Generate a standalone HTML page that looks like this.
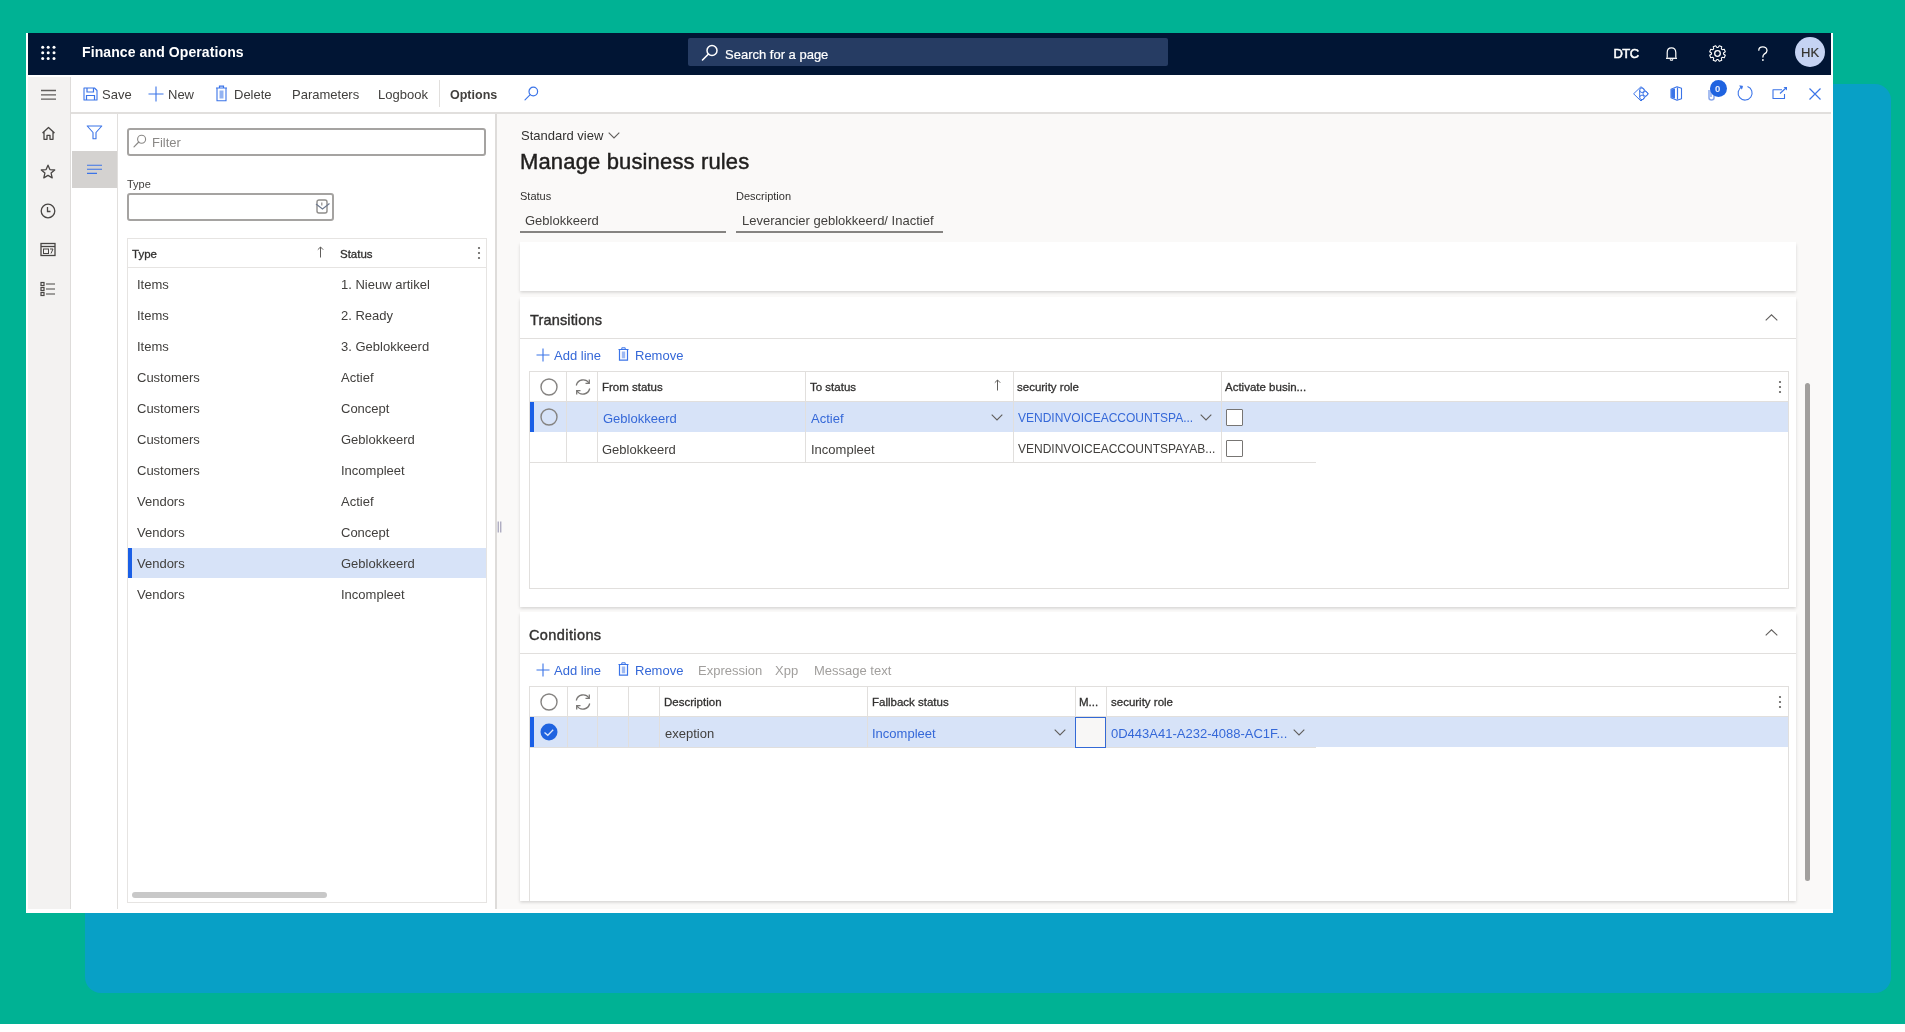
<!DOCTYPE html>
<html><head><meta charset="utf-8">
<style>
*{box-sizing:border-box;margin:0;padding:0}
html,body{width:1905px;height:1032px;overflow:hidden}
body{background:#00b294;position:relative;font-family:"Liberation Sans",sans-serif;color:#42403e;font-size:13px}
.a{position:absolute}
.t{position:absolute;white-space:nowrap;line-height:1}
.blue{color:#3568d8}
svg{position:absolute;overflow:visible}
#wrap{position:absolute;left:0;top:0;width:1905px;height:1032px;filter:blur(0.45px)}
</style></head><body><div id="wrap">
<!-- background decor -->
<div class="a" style="left:85px;top:84px;width:1806px;height:909px;background:#08a0c6;border-radius:16px"></div>
<div class="a" style="left:0;top:1024px;width:1905px;height:8px;background:#fff"></div>
<!-- app frame -->
<div class="a" style="left:26px;top:33px;width:1807px;height:880px;background:#fff"></div>
<!-- header -->
<div class="a" style="left:28px;top:33px;width:1803px;height:42px;background:#011534"></div>
<!-- nav -->
<div class="a" style="left:28px;top:77px;width:43px;height:832px;background:#f3f2f1;border-right:1px solid #dedcda"></div>
<!-- toolbar border -->
<div class="a" style="left:71px;top:112px;width:1760px;height:2px;background:#e1dfdd"></div>
<!-- filter strip -->
<div class="a" style="left:117px;top:114px;width:1px;height:795px;background:#e1dfdd"></div>
<div class="a" style="left:72px;top:151px;width:45px;height:37px;background:#d4d2d0"></div>
<!-- filter pane border -->
<div class="a" style="left:495px;top:114px;width:2px;height:795px;background:#dedcda"></div>
<!-- main bg -->
<div class="a" style="left:497px;top:114px;width:1334px;height:795px;background:#faf9f8"></div>

<!-- header content -->
<svg style="left:40px;top:45px" width="18" height="17" viewBox="0 0 18 17">
<g fill="#fff">
<circle cx="2.7" cy="2.3" r="1.5"/><circle cx="8.2" cy="2.3" r="1.5"/><circle cx="14" cy="2.3" r="1.5"/>
<circle cx="2.7" cy="7.7" r="1.5"/><circle cx="8.2" cy="7.7" r="1.5"/><circle cx="14" cy="7.7" r="1.5"/>
<circle cx="2.7" cy="13.5" r="1.5"/><circle cx="8.2" cy="13.5" r="1.5"/><circle cx="14" cy="13.5" r="1.5"/>
</g></svg>
<div class="t" style="left:82px;top:45px;font-size:14px;font-weight:bold;color:#fff;letter-spacing:0.1px">Finance and Operations</div>
<div class="a" style="left:688px;top:38px;width:480px;height:28px;background:#263c63;border-radius:2px"></div>
<svg style="left:701px;top:44px" width="18" height="18" viewBox="0 0 18 18"><circle cx="11" cy="6.5" r="5" fill="none" stroke="#fff" stroke-width="1.5"/><path d="M7.5 10 L1.5 16" stroke="#fff" stroke-width="1.6" stroke-linecap="round"/></svg>
<div class="t" style="left:725px;top:47.5px;font-size:13px;color:#fff;-webkit-text-stroke:0.2px #fff">Search for a page</div>
<div class="t" style="left:1613.5px;top:47px;font-size:13px;color:#fff;letter-spacing:-0.6px;-webkit-text-stroke:0.5px #fff">DTC</div>
<svg style="left:1664px;top:45.5px" width="16" height="16" viewBox="0 0 16 16"><path d="M3.2 11.8 L3.2 6.5 C3.2 3.3 5 1.8 7.5 1.8 C10 1.8 11.8 3.3 11.8 6.5 L11.8 11.8" fill="none" stroke="#fff" stroke-width="1.2" stroke-linejoin="round"/><path d="M2 12.3 L13 12.3" stroke="#fff" stroke-width="1.3"/><path d="M6 13.3 Q7.5 15.2 9 13.3" fill="none" stroke="#fff" stroke-width="1.2"/></svg>
<svg style="left:1709px;top:45px" width="17" height="17" viewBox="0 0 17 17"><path d="M14.47 9.06 L16.30 10.27 L15.27 12.77 L13.12 12.33 L12.33 13.12 L12.77 15.27 L10.27 16.30 L9.06 14.47 L7.94 14.47 L6.73 16.30 L4.23 15.27 L4.67 13.12 L3.88 12.33 L1.73 12.77 L0.70 10.27 L2.53 9.06 L2.53 7.94 L0.70 6.73 L1.73 4.23 L3.88 4.67 L4.67 3.88 L4.23 1.73 L6.73 0.70 L7.94 2.53 L9.06 2.53 L10.27 0.70 L12.77 1.73 L12.33 3.88 L13.12 4.67 L15.27 4.23 L16.30 6.73 L14.47 7.94 Z" fill="none" stroke="#fff" stroke-width="1.05" stroke-linejoin="round"/><circle cx="8.5" cy="8.5" r="2.8" fill="none" stroke="#fff" stroke-width="1.3"/></svg>
<svg style="left:1757px;top:46px" width="12" height="16" viewBox="0 0 12 16"><path d="M1.8 4.2 C1.8 1.8 3.7 0.8 5.8 0.8 C8 0.8 10 2.2 10 4.4 C10 6.6 8.2 7.4 6.9 8.4 C6.1 9 5.9 9.6 5.9 11" fill="none" stroke="#fff" stroke-width="1.3" stroke-linecap="round"/><circle cx="5.9" cy="14" r="0.9" fill="#fff"/></svg>
<div class="a" style="left:1795px;top:37px;width:30px;height:30px;border-radius:50%;background:#c5d3f3"></div>
<div class="t" style="left:1801px;top:46px;font-size:13px;color:#35332f;-webkit-text-stroke:0.2px #35332f">HK</div>

<!-- nav icons -->
<svg style="left:40px;top:89px" width="17" height="12" viewBox="0 0 17 12"><path d="M1 1.5H16M1 5.8H16M1 10.2H16" stroke="#605e5c" stroke-width="1.3"/></svg>
<svg style="left:41px;top:126px" width="15" height="15" viewBox="0 0 15 15"><path d="M1.5 7 L7.5 1.5 L13.5 7 M3 5.8 V13.3 H6 V9.3 H9 V13.3 H12 V5.8" fill="none" stroke="#484644" stroke-width="1.3" stroke-linejoin="round"/></svg>
<svg style="left:40px;top:164px" width="16" height="16" viewBox="0 0 16 16"><path d="M8 1.2 L9.9 5.6 L14.7 6 L11.1 9.1 L12.2 13.9 L8 11.4 L3.8 13.9 L4.9 9.1 L1.3 6 L6.1 5.6 Z" fill="none" stroke="#484644" stroke-width="1.3" stroke-linejoin="round"/></svg>
<svg style="left:40px;top:203px" width="16" height="16" viewBox="0 0 16 16"><circle cx="8" cy="8" r="6.8" fill="none" stroke="#484644" stroke-width="1.3"/><path d="M7.5 4 V8.5 H10.5" fill="none" stroke="#484644" stroke-width="1.3"/></svg>
<svg style="left:40px;top:242px" width="16" height="15" viewBox="0 0 16 15"><rect x="1" y="1.5" width="14" height="12" fill="none" stroke="#484644" stroke-width="1.3"/><path d="M1 4.5 H15" stroke="#484644" stroke-width="1.3"/><rect x="3.5" y="7" width="5" height="4.5" fill="none" stroke="#484644" stroke-width="1"/><path d="M10 7 H13 L11 11.5" fill="none" stroke="#484644" stroke-width="1"/></svg>
<svg style="left:40px;top:281px" width="16" height="16" viewBox="0 0 16 16"><g fill="none" stroke="#484644" stroke-width="1.2"><rect x="1" y="1.5" width="3" height="3"/><rect x="1" y="6.5" width="3" height="3"/><rect x="1" y="11.5" width="3" height="3"/><path d="M6 3H15M6 8H15M6 13H15"/></g></svg>

<!-- toolbar -->
<svg style="left:83px;top:87px" width="15" height="14" viewBox="0 0 15 14"><path d="M1 1 H11.5 L14 3.5 V13 H1 Z" fill="none" stroke="#3b74e8" stroke-width="1.1" stroke-linejoin="round"/><path d="M4 1 V5 H10.5 V1" fill="none" stroke="#3b74e8" stroke-width="1.2"/><path d="M3.5 13 V8.5 H11.5 V13" fill="none" stroke="#3b74e8" stroke-width="1.2"/></svg>
<div class="t" style="left:102px;top:88px">Save</div>
<svg style="left:148px;top:86px" width="16" height="16" viewBox="0 0 16 16"><path d="M8 0.5 V15.5 M0.5 8 H15.5" stroke="#3b74e8" stroke-width="1.1"/></svg>
<div class="t" style="left:168px;top:88px">New</div>
<svg style="left:215px;top:85px" width="13" height="17" viewBox="0 0 13 17"><path d="M1 3 H12 M4.5 3 V1.2 H8.5 V3" fill="none" stroke="#3b74e8" stroke-width="1.2"/><path d="M2 3 V15.8 H11 V3" fill="none" stroke="#3b74e8" stroke-width="1.1"/><rect x="4.5" y="5.5" width="4" height="8" fill="#3b74e8" opacity="0.55"/></svg>
<div class="t" style="left:234px;top:88px">Delete</div>
<div class="t" style="left:292px;top:88px">Parameters</div>
<div class="t" style="left:378px;top:88px">Logbook</div>
<div class="a" style="left:439px;top:80px;width:1px;height:27px;background:#e1dfdd"></div>
<div class="t" style="left:450px;top:88.5px;font-weight:bold;font-size:12.5px">Options</div>
<svg style="left:524px;top:86px" width="15" height="15" viewBox="0 0 15 15"><circle cx="9.3" cy="5.5" r="4.3" fill="none" stroke="#3b74e8" stroke-width="1.2"/><path d="M6.2 8.6 L1 13.8" stroke="#3b74e8" stroke-width="1.1" stroke-linecap="round"/></svg>

<!-- toolbar right icons -->
<svg style="left:1633px;top:86px" width="17" height="16" viewBox="0 0 17 16"><g fill="none" stroke="#3b74e8" stroke-width="1"><path d="M8 0.7 L15.5 7.8 L8 15 L0.6 7.8 Z"/><circle cx="9" cy="4.2" r="2.3"/><circle cx="12.3" cy="7.8" r="2.3"/><circle cx="9" cy="11.4" r="2.3"/><path d="M6.7 4.2 V11.4"/></g></svg>
<svg style="left:1670px;top:86px" width="13" height="15" viewBox="0 0 13 15"><path d="M1 3.3 L7 0.8 L11.5 2.3 V12.7 L7 14.2 L1 11.8 Z" fill="none" stroke="#3b74e8" stroke-width="1.1" stroke-linejoin="round"/><path d="M1.2 3.5 L5 2.6 V12.5 L1.2 11.6 Z" fill="#3b74e8"/><path d="M7.5 1.5 V13.5" stroke="#3b74e8" stroke-width="1.2"/></svg>
<svg style="left:1707px;top:86px" width="9" height="16" viewBox="0 0 9 16"><path d="M2 4 V12 C2 14.5 7 14.5 7 12 V3 C7 1 4 1 4 3 V11" fill="none" stroke="#8aa8ec" stroke-width="1.5"/></svg>
<div class="a" style="left:1710px;top:80px;width:17px;height:17px;border-radius:50%;background:#1f63e0"></div>
<div class="t" style="left:1715px;top:84px;font-size:9.5px;font-weight:bold;color:#e8eefc">0</div>
<svg style="left:1737px;top:85px" width="17" height="17" viewBox="0 0 17 17"><path d="M5 1.8 A7 7 0 1 0 10.5 1.5" fill="none" stroke="#3b74e8" stroke-width="1.1"/><path d="M2.5 0.8 L5.6 1.2 L4.6 4.2" fill="#3b74e8" stroke="#3b74e8" stroke-width="0.8"/></svg>
<svg style="left:1772px;top:86px" width="16" height="14" viewBox="0 0 16 14"><path d="M10 3.8 H1 V12.5 H12.5 V8" fill="none" stroke="#3b74e8" stroke-width="1.1" stroke-linejoin="round"/><path d="M8 7.5 L14.5 1.5" stroke="#3b74e8" stroke-width="1.1"/><path d="M11.5 1 H15 V4.5 Z" fill="#3b74e8"/></svg>
<svg style="left:1809px;top:88px" width="12" height="12" viewBox="0 0 12 12"><path d="M0.5 0.5 L11.5 11.5 M11.5 0.5 L0.5 11.5" stroke="#3b74e8" stroke-width="1.2"/></svg>

<!-- filter strip icons -->
<svg style="left:86px;top:125px" width="17" height="15" viewBox="0 0 17 15"><path d="M1.2 1 H15.8 L10 7.5 V13.8 H7 V7.5 Z" fill="none" stroke="#3b74e8" stroke-width="1.1" stroke-linejoin="round"/></svg>
<svg style="left:86px;top:164px" width="17" height="11" viewBox="0 0 17 11"><path d="M1 1.2 H16 M1 5.3 H16 M1 9.4 H11" stroke="#3b74e8" stroke-width="1.1"/></svg>

<!-- filter pane -->
<div class="a" style="left:127px;top:128px;width:359px;height:28px;border:2px solid #a5a3a1;border-radius:3px"></div>
<svg style="left:133px;top:134px" width="14" height="14" viewBox="0 0 14 14"><circle cx="8.6" cy="5.2" r="4" fill="none" stroke="#8a8886" stroke-width="1.1"/><path d="M5.8 8 L1 12.8" stroke="#8a8886" stroke-width="1.2" stroke-linecap="round"/></svg>
<div class="t" style="left:152px;top:136px;color:#8a8886">Filter</div>
<div class="t" style="left:127px;top:179px;font-size:11px">Type</div>
<div class="a" style="left:127px;top:193px;width:207px;height:28px;border:2px solid #a5a3a1;border-radius:3px"></div>
<svg style="left:315px;top:199px" width="16" height="15" viewBox="0 0 16 15"><rect x="2" y="1" width="10" height="13" rx="2" fill="none" stroke="#8f8d8b" stroke-width="1.4"/><path d="M6.8 3.5 L6.8 6.5" stroke="#8f8d8b" stroke-width="1.2"/><path d="M1 5 L7.5 10 L14.5 4.5" fill="none" stroke="#6f7a8f" stroke-width="1.2"/></svg>
<!-- grid -->
<div class="a" style="left:127px;top:238px;width:360px;height:665px;border:1px solid #e6e4e2"></div>
<div class="a" style="left:128px;top:267px;width:358px;height:1px;background:#e6e4e2"></div>
<div class="t" style="left:132px;top:249px;font-size:11.5px;color:#323130;-webkit-text-stroke:0.3px #323130">Type</div>
<svg style="left:317px;top:246px" width="7" height="12" viewBox="0 0 7 12"><path d="M3.5 11.5 V1 M0.8 3.7 L3.5 1 L6.2 3.7" fill="none" stroke="#605e5c" stroke-width="1"/></svg>
<div class="t" style="left:340px;top:249px;font-size:11.5px;color:#323130;-webkit-text-stroke:0.3px #323130">Status</div>
<svg style="left:477px;top:246px" width="4" height="14" viewBox="0 0 4 14"><circle cx="2" cy="2" r="1.1" fill="#605e5c"/><circle cx="2" cy="7" r="1.1" fill="#605e5c"/><circle cx="2" cy="12" r="1.1" fill="#605e5c"/></svg>
<div class="t" style="left:137px;top:278px">Items</div><div class="t" style="left:341px;top:278px">1. Nieuw artikel</div>
<div class="t" style="left:137px;top:309px">Items</div><div class="t" style="left:341px;top:309px">2. Ready</div>
<div class="t" style="left:137px;top:340px">Items</div><div class="t" style="left:341px;top:340px">3. Geblokkeerd</div>
<div class="t" style="left:137px;top:371px">Customers</div><div class="t" style="left:341px;top:371px">Actief</div>
<div class="t" style="left:137px;top:402px">Customers</div><div class="t" style="left:341px;top:402px">Concept</div>
<div class="t" style="left:137px;top:433px">Customers</div><div class="t" style="left:341px;top:433px">Geblokkeerd</div>
<div class="t" style="left:137px;top:464px">Customers</div><div class="t" style="left:341px;top:464px">Incompleet</div>
<div class="t" style="left:137px;top:495px">Vendors</div><div class="t" style="left:341px;top:495px">Actief</div>
<div class="t" style="left:137px;top:526px">Vendors</div><div class="t" style="left:341px;top:526px">Concept</div>
<div class="a" style="left:128px;top:548px;width:358px;height:30px;background:#d7e3f8"></div><div class="a" style="left:128px;top:548px;width:4px;height:30px;background:#1a5fe6"></div>
<div class="t" style="left:137px;top:557px">Vendors</div><div class="t" style="left:341px;top:557px">Geblokkeerd</div>
<div class="t" style="left:137px;top:588px">Vendors</div><div class="t" style="left:341px;top:588px">Incompleet</div>

<div class="a" style="left:132px;top:892px;width:195px;height:6px;border-radius:3px;background:#c8c8c8"></div>
<svg style="left:497px;top:521px" width="5" height="12" viewBox="0 0 5 12"><path d="M1.2 0.5 V11.5 M3.8 0.5 V11.5" stroke="#8f8dab" stroke-width="1"/></svg>

<!-- main header -->
<div class="t" style="left:521px;top:129px;color:#323130">Standard view</div>
<svg style="left:608px;top:131.5px" width="12" height="7" viewBox="0 0 12 7"><path d="M0.7 0.7 L6 6 L11.3 0.7" fill="none" stroke="#605e5c" stroke-width="1.1"/></svg>
<div class="t" style="left:520px;top:151px;font-size:22px;color:#201f1e;letter-spacing:0.15px;-webkit-text-stroke:0.45px #201f1e">Manage business rules</div>
<div class="t" style="left:520px;top:191px;font-size:11px;color:#323130">Status</div>
<div class="t" style="left:525px;top:214px">Geblokkeerd</div>
<div class="a" style="left:520px;top:231px;width:206px;height:1.5px;background:#858381"></div>
<div class="t" style="left:736px;top:191px;font-size:11px;color:#323130">Description</div>
<div class="t" style="left:742px;top:214px">Leverancier geblokkeerd/ Inactief</div>
<div class="a" style="left:736px;top:231px;width:207px;height:1.5px;background:#858381"></div>

<!-- card 1 -->
<div class="a" style="left:520px;top:242px;width:1276px;height:49px;background:#fff;box-shadow:0 1.5px 3px rgba(0,0,0,0.15)"></div>
<!-- card 2 transitions -->
<div class="a" style="left:520px;top:297px;width:1276px;height:310px;background:#fff;box-shadow:0 1.5px 3px rgba(0,0,0,0.15)"></div>
<div class="a" style="left:520px;top:338px;width:1276px;height:1px;background:#e1dfdd"></div>
<div class="t" style="left:530px;top:312.5px;font-size:14.5px;color:#323130;letter-spacing:0.15px;-webkit-text-stroke:0.4px #323130">Transitions</div>
<svg style="left:1765px;top:314px" width="13" height="7" viewBox="0 0 13 7"><path d="M0.7 6.3 L6.5 0.8 L12.3 6.3" fill="none" stroke="#605e5c" stroke-width="1.1"/></svg>
<svg style="left:535.5px;top:348px" width="14" height="14" viewBox="0 0 14 14"><path d="M7 0.5 V13.5 M0.5 7 H13.5" stroke="#3b74e8" stroke-width="1.1"/></svg>
<div class="t" style="left:554px;top:349px;color:#3568d8">Add line</div>
<svg style="left:618px;top:347px" width="11" height="14" viewBox="0 0 11 14"><path d="M0.5 2.5 H10.5 M3.8 2.5 V0.8 H7.2 V2.5" fill="none" stroke="#3b74e8" stroke-width="1"/><path d="M1.5 2.5 V13.2 H9.5 V2.5" fill="none" stroke="#3b74e8" stroke-width="1.2"/><rect x="3.8" y="4.5" width="3.4" height="6.8" fill="#3b74e8" opacity="0.5"/></svg>
<div class="t" style="left:635px;top:349px;color:#3568d8">Remove</div>
<!-- transitions grid -->
<div class="a" style="left:529px;top:371px;width:1260px;height:218px;border:1px solid #e1dfdd"></div>
<div class="a" style="left:530px;top:401px;width:1258px;height:1px;background:#e1dfdd"></div>
<div class="a" style="left:530px;top:402px;width:1258px;height:30px;background:#d7e3f8"></div>
<div class="a" style="left:530px;top:402px;width:4px;height:30px;background:#1a5fe6"></div>
<div class="a" style="left:530px;top:462px;width:786px;height:1px;background:#e1dfdd"></div>
<div class="a" style="left:566px;top:372px;width:1px;height:91px;background:#e1dfdd"></div>
<div class="a" style="left:597px;top:372px;width:1px;height:91px;background:#e1dfdd"></div>
<div class="a" style="left:805px;top:372px;width:1px;height:91px;background:#e1dfdd"></div>
<div class="a" style="left:1013px;top:372px;width:1px;height:91px;background:#e1dfdd"></div>
<div class="a" style="left:1221px;top:372px;width:1px;height:91px;background:#e1dfdd"></div>
<svg style="left:540px;top:378px" width="18" height="18" viewBox="0 0 18 18"><circle cx="9" cy="9" r="8" fill="none" stroke="#858381" stroke-width="1.4"/></svg>
<svg style="left:574px;top:378px" width="18" height="18" viewBox="0 0 18 18"><g fill="none" stroke="#7a7876" stroke-width="1.3"><path d="M2.3 7.5 A7 7 0 0 1 15 5"/><path d="M15.7 10.5 A7 7 0 0 1 3 13"/><path d="M15.3 1.5 V5.3 H11.5"/><path d="M2.7 16.5 V12.7 H6.5"/></g></svg>
<div class="t" style="left:602px;top:382px;font-size:11.5px;color:#323130;-webkit-text-stroke:0.3px #323130">From status</div>
<div class="t" style="left:810px;top:382px;font-size:11.5px;color:#323130;-webkit-text-stroke:0.3px #323130">To status</div>
<svg style="left:994px;top:379px" width="7" height="12" viewBox="0 0 7 12"><path d="M3.5 11.5 V1 M0.8 3.7 L3.5 1 L6.2 3.7" fill="none" stroke="#605e5c" stroke-width="1"/></svg>
<div class="t" style="left:1017px;top:382px;font-size:11.5px;color:#323130;-webkit-text-stroke:0.3px #323130">security role</div>
<div class="t" style="left:1225px;top:382px;font-size:11.5px;color:#323130;-webkit-text-stroke:0.3px #323130">Activate busin...</div>
<svg style="left:1778px;top:380px" width="4" height="14" viewBox="0 0 4 14"><circle cx="2" cy="2" r="1.1" fill="#605e5c"/><circle cx="2" cy="7" r="1.1" fill="#605e5c"/><circle cx="2" cy="12" r="1.1" fill="#605e5c"/></svg>
<svg style="left:540px;top:408px" width="18" height="18" viewBox="0 0 18 18"><circle cx="9" cy="9" r="8" fill="none" stroke="#858381" stroke-width="1.4"/></svg>
<div class="t" style="left:603px;top:412px;color:#3568d8">Geblokkeerd</div>
<div class="t" style="left:811px;top:412px;color:#3568d8">Actief</div>
<svg style="left:991px;top:414px" width="12" height="7" viewBox="0 0 12 7"><path d="M0.7 0.7 L6 6 L11.3 0.7" fill="none" stroke="#605e5c" stroke-width="1.1"/></svg>
<div class="t" style="left:1018px;top:412px;color:#3568d8;font-size:12px">VENDINVOICEACCOUNTSPA...</div>
<svg style="left:1200px;top:414px" width="12" height="7" viewBox="0 0 12 7"><path d="M0.7 0.7 L6 6 L11.3 0.7" fill="none" stroke="#605e5c" stroke-width="1.1"/></svg>
<div class="a" style="left:1226px;top:409px;width:17px;height:17px;border:1.2px solid #777573;background:#fff;border-radius:1px"></div>
<div class="t" style="left:602px;top:443px">Geblokkeerd</div>
<div class="t" style="left:811px;top:443px">Incompleet</div>
<div class="t" style="left:1018px;top:443px;font-size:12px">VENDINVOICEACCOUNTSPAYAB...</div>
<div class="a" style="left:1226px;top:440px;width:17px;height:17px;border:1.2px solid #777573;background:#fff;border-radius:1px"></div>

<!-- card 3 conditions -->
<div class="a" style="left:520px;top:612px;width:1276px;height:289px;background:#fff;box-shadow:0 1.5px 3px rgba(0,0,0,0.15)"></div>
<div class="a" style="left:520px;top:653px;width:1276px;height:1px;background:#e1dfdd"></div>
<div class="t" style="left:529px;top:627.5px;font-size:14.5px;color:#323130;letter-spacing:0.4px;-webkit-text-stroke:0.4px #323130">Conditions</div>
<svg style="left:1765px;top:629px" width="13" height="7" viewBox="0 0 13 7"><path d="M0.7 6.3 L6.5 0.8 L12.3 6.3" fill="none" stroke="#605e5c" stroke-width="1.1"/></svg>
<svg style="left:535.5px;top:663px" width="14" height="14" viewBox="0 0 14 14"><path d="M7 0.5 V13.5 M0.5 7 H13.5" stroke="#3b74e8" stroke-width="1.1"/></svg>
<div class="t" style="left:554px;top:664px;color:#3568d8">Add line</div>
<svg style="left:618px;top:662px" width="11" height="14" viewBox="0 0 11 14"><path d="M0.5 2.5 H10.5 M3.8 2.5 V0.8 H7.2 V2.5" fill="none" stroke="#3b74e8" stroke-width="1"/><path d="M1.5 2.5 V13.2 H9.5 V2.5" fill="none" stroke="#3b74e8" stroke-width="1.2"/><rect x="3.8" y="4.5" width="3.4" height="6.8" fill="#3b74e8" opacity="0.5"/></svg>
<div class="t" style="left:635px;top:664px;color:#3568d8">Remove</div>
<div class="t" style="left:698px;top:664px;color:#a19f9d">Expression</div>
<div class="t" style="left:775px;top:664px;color:#a19f9d">Xpp</div>
<div class="t" style="left:814px;top:664px;color:#a19f9d">Message text</div>
<!-- conditions grid -->
<div class="a" style="left:529px;top:686px;width:1260px;height:215px;border:1px solid #e1dfdd;border-bottom:none"></div>
<div class="a" style="left:530px;top:716px;width:1258px;height:1px;background:#e1dfdd"></div>
<div class="a" style="left:530px;top:717px;width:1258px;height:30px;background:#d7e3f8"></div>
<div class="a" style="left:530px;top:717px;width:4px;height:30px;background:#1a5fe6"></div>
<div class="a" style="left:530px;top:747px;width:786px;height:1px;background:#e1dfdd"></div>
<div class="a" style="left:567px;top:687px;width:1px;height:60px;background:#e1dfdd"></div>
<div class="a" style="left:597px;top:687px;width:1px;height:60px;background:#e1dfdd"></div>
<div class="a" style="left:628px;top:687px;width:1px;height:60px;background:#e1dfdd"></div>
<div class="a" style="left:659px;top:687px;width:1px;height:60px;background:#e1dfdd"></div>
<div class="a" style="left:867px;top:687px;width:1px;height:60px;background:#e1dfdd"></div>
<div class="a" style="left:1075px;top:687px;width:1px;height:60px;background:#e1dfdd"></div>
<div class="a" style="left:1106px;top:687px;width:1px;height:60px;background:#e1dfdd"></div>
<svg style="left:540px;top:693px" width="18" height="18" viewBox="0 0 18 18"><circle cx="9" cy="9" r="8" fill="none" stroke="#858381" stroke-width="1.4"/></svg>
<svg style="left:574px;top:693px" width="18" height="18" viewBox="0 0 18 18"><g fill="none" stroke="#7a7876" stroke-width="1.3"><path d="M2.3 7.5 A7 7 0 0 1 15 5"/><path d="M15.7 10.5 A7 7 0 0 1 3 13"/><path d="M15.3 1.5 V5.3 H11.5"/><path d="M2.7 16.5 V12.7 H6.5"/></g></svg>
<div class="t" style="left:664px;top:697px;font-size:11.5px;color:#323130;-webkit-text-stroke:0.3px #323130">Description</div>
<div class="t" style="left:872px;top:697px;font-size:11.5px;color:#323130;-webkit-text-stroke:0.3px #323130">Fallback status</div>
<div class="t" style="left:1079px;top:697px;font-size:11.5px;color:#323130;-webkit-text-stroke:0.3px #323130">M...</div>
<div class="t" style="left:1111px;top:697px;font-size:11.5px;color:#323130;-webkit-text-stroke:0.3px #323130">security role</div>
<svg style="left:1778px;top:695px" width="4" height="14" viewBox="0 0 4 14"><circle cx="2" cy="2" r="1.1" fill="#605e5c"/><circle cx="2" cy="7" r="1.1" fill="#605e5c"/><circle cx="2" cy="12" r="1.1" fill="#605e5c"/></svg>
<svg style="left:540px;top:723px" width="18" height="18" viewBox="0 0 18 18"><circle cx="9" cy="9" r="8.5" fill="#1f63e0"/><path d="M4.5 9.5 L7.8 12.3 L13.2 6.8" fill="none" stroke="#dfe8fb" stroke-width="1.3"/></svg>
<div class="t" style="left:665px;top:727px">exeption</div>
<div class="t" style="left:872px;top:727px;color:#3568d8">Incompleet</div>
<svg style="left:1054px;top:729px" width="12" height="7" viewBox="0 0 12 7"><path d="M0.7 0.7 L6 6 L11.3 0.7" fill="none" stroke="#605e5c" stroke-width="1.1"/></svg>
<div class="a" style="left:1075px;top:717px;width:31px;height:31px;border:1.7px solid #3369d6;background:#f8f7f6"></div>
<div class="t" style="left:1111px;top:727px;color:#3568d8">0D443A41-A232-4088-AC1F...</div>
<svg style="left:1293px;top:729px" width="12" height="7" viewBox="0 0 12 7"><path d="M0.7 0.7 L6 6 L11.3 0.7" fill="none" stroke="#605e5c" stroke-width="1.1"/></svg>

<!-- vertical scrollbar -->
<div class="a" style="left:1805px;top:383px;width:5px;height:498px;border-radius:3px;background:#a19f9d"></div>
</div></body></html>
